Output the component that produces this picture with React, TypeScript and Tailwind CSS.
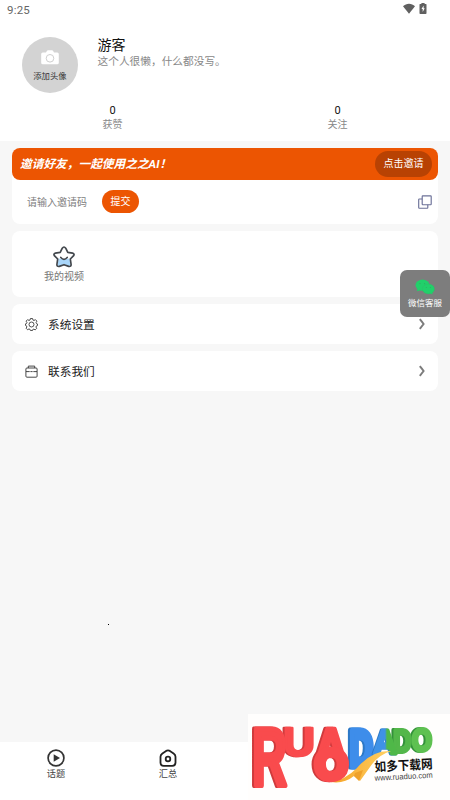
import { useState } from "react";
import type { ReactNode } from "react";

interface StatProps {
  value: number;
  label: string;
}

const Stat = ({ value, label }: StatProps) => (
  <div className="flex w-1/2 flex-col items-center">
    <span className="h-[14px] text-[11px] leading-[14px] text-[#111]">{value}</span>
    <span className="h-[14px] text-[10px] leading-[14px] text-[#888]">{label}</span>
  </div>
);

interface MenuRowProps {
  icon: ReactNode;
  label: string;
}

const MenuRow = ({ icon, label }: MenuRowProps) => (
  <button className="flex h-10 w-full items-center rounded-[8px] bg-white pl-[12.5px] pr-[12px] text-left">
    {icon}
    <span className="ml-[10.5px] flex-1 pt-px text-[11.7px] leading-4 text-[#222]">{label}</span>
    <svg viewBox="0 0 8 12" className="h-3 w-2" fill="none" stroke="#7c7c7c" strokeWidth="2">
      <path d="M1.8 1.2 Q3.8 3.6 5.6 6 Q3.8 8.4 1.8 10.8" />
    </svg>
  </button>
);

const WifiIcon = () => (
  <svg viewBox="0 0 12 11" className="h-[11px] w-3" fill="#606060">
    <path d="M0 3.2 C3.3-.2 8.7-.2 12 3.2 L6 10.8 Z" />
  </svg>
);

const BatteryIcon = () => (
  <svg viewBox="0 0 8 11" className="h-[11px] w-2">
    <path d="M2.4 0h3.2v1H7q.5 0 .5.6v8.6q0 .8-.8.8H1.3q-.8 0-.8-.8V1.6Q.5 1 1 1h1.4Z" fill="#606060" />
    <path d="M4.6 2.6 2.5 6.1h1.2v2.8l2-3.7H4.6Z" fill="#fff" />
  </svg>
);

const CameraIcon = () => (
  <svg viewBox="0 0 18 15" className="h-[15px] w-[18px]">
    <path d="M5 2.5 6 .8Q6.3.3 7 .3h4q.7 0 1 .5l1 1.7h3.2q1.6 0 1.6 1.6v8.6q0 1.6-1.6 1.6H1.8Q.2 14.3.2 12.7V4.1q0-1.6 1.6-1.6Z" fill="#fff" />
    <circle cx="9" cy="8.3" r="3.8" fill="#fff" stroke="#cfcfcf" strokeWidth="1" />
  </svg>
);

const CopyIcon = () => (
  <svg viewBox="0 0 14 14" className="h-[14px] w-[14px]" fill="none" stroke="#6c7198" strokeWidth="1.15">
    <rect x="4.2" y=".8" width="9" height="8.9" rx=".6" />
    <path d="M4.2 4H1.3q-.6 0-.6.6v8q0 .6.6.6h7.9q.6 0 .6-.6V9.7" />
  </svg>
);

const StarIcon = () => (
  <svg viewBox="0 0 22 22" className="h-[22px] w-[22px]">
    <path d="M5.6 12.5q5.2 1.5 10.8 0l1.1 6.5q-.4 1.5-2 .9L11 18.2l-4.5 1.9q-1.7.3-1.9-1.1Z" fill="#a9d6fa" />
    <path
      d="M9.3 2.2Q11-.2 12.7 2.2L14.8 6.3l4.8.8q2.4.7.8 2.8L17.3 13l.8 5.5q0 2.4-2.4 1.9L11 18.7l-4.7 1.7q-2.4.5-2.4-1.9L4.7 13 1.6 9.9Q0 7.8 2.4 7.1l4.8-.8Z"
      fill="none"
      stroke="#42474d"
      strokeWidth="1.7"
      strokeLinejoin="round"
    />
    <path d="M7.8 11.5q3.2 3.6 6.4 0" fill="none" stroke="#42474d" strokeWidth="1.7" strokeLinecap="round" />
  </svg>
);

const GearIcon = () => (
  <svg viewBox="0 0 24 24" className="h-[13px] w-[13px]" fill="none" stroke="#333" strokeWidth="1.6" strokeLinejoin="round">
    <path d="M10 1h4l.7 2.8 2 .8L19.2 3l2.8 2.8-1.6 2.5.8 2 1.8.7v3l-2 .7-.8 2 1.4 2.4-2.8 2.8-2.4-1.4-2 .8L14 23h-4l-.7-2-2-.8-2.5 1.5L2 18.9l1.5-2.4-.8-2-1.7-.7v-3l1.8-.6.8-2L2 5.8 4.8 3l2.5 1.5 2-.8Z" />
    <circle cx="12" cy="12" r="4.6" />
  </svg>
);

const BriefcaseIcon = () => (
  <svg viewBox="0 0 13 13" className="h-[13px] w-[13px]" fill="none" stroke="#333" strokeWidth=".9">
    <rect x=".9" y="3" width="11.2" height="9.2" rx="1" />
    <path d="M3.3 3V1.1h6.4V3M1 6.6h3.7M8.3 6.6H12M5.4 6.6h2.2" />
  </svg>
);

const WechatIcon = () => (
  <svg viewBox="0 0 20 16" className="h-4 w-5">
    <ellipse cx="7.5" cy="6.2" rx="7" ry="5.6" fill="#21d06a" />
    <path d="m2.7 9-.8 3.2 4-1.3Z" fill="#21d06a" />
    <ellipse cx="13.4" cy="10" rx="6.1" ry="5" fill="#21d06a" stroke="#35b067" strokeWidth=".3" />
    <path d="m14.5 13.8 3 1.8-.3-2.8Z" fill="#21d06a" />
    <g fill="#35a862">
      <circle cx="5" cy="4.6" r=".6" />
      <circle cx="9.6" cy="4.6" r=".6" />
      <circle cx="11.3" cy="8.4" r=".5" />
      <circle cx="15.3" cy="8.4" r=".5" />
    </g>
  </svg>
);

const PlayCircleIcon = () => (
  <svg viewBox="0 0 18 18" className="h-[18px] w-[18px]">
    <circle cx="9" cy="9" r="7.9" fill="none" stroke="#333" strokeWidth="1.7" />
    <path d="M6.7 5.2v7.6L13 9Z" fill="#333" />
  </svg>
);

const HomeIcon = () => (
  <svg viewBox="0 0 18 18" className="h-[18px] w-[18px]" fill="none" stroke="#222" strokeWidth="1.8">
    <path d="M7.1 1.9q1.9-1 3.8 0l3.7 2.5q1.9 1.3 1.9 3.4v5.7q0 3.3-3.2 3.3H4.7q-3.2 0-3.2-3.3V7.8q0-2.1 1.9-3.4Z" />
    <circle cx="9" cy="10" r="2.3" />
  </svg>
);

// Ink bounds of the capitals in Liberation Sans Bold at 100px: left edge and width
const INK: Record<string, [number, number]> = {
  R: [6.7, 63.5],
  U: [6, 60],
  A: [1, 70],
  D: [6.7, 61.5],
  O: [4.1, 69.6],
};

interface LogoLetterProps {
  char: string;
  x: number;
  y: number;
  w: number;
  h: number;
  color: string;
  bold?: number;
}

// One letter of the logo, stretched to fill a box. "bold" is in glyph units
const LogoLetter = ({ char, x, y, w, h, color, bold = 6 }: LogoLetterProps) => {
  const [left, width] = INK[char];
  const sx = w / (width + bold);
  const sy = h / (68.8 + bold);
  return (
    <text
      transform={`translate(${x - (left - bold / 2) * sx} ${y + h - (bold / 2) * sy}) scale(${sx} ${sy})`}
      fontFamily="Liberation Sans, Arial, sans-serif"
      fontWeight="700"
      fontSize="100"
      fill={color}
      stroke={color}
      strokeWidth={bold}
      strokeLinejoin="round"
    >
      {char}
    </text>
  );
};

const Watermark = () => (
  <svg viewBox="248 714 202 86" className="block h-[86px] w-[202px]">
    <defs>
      <linearGradient id="blueGreen" x1="0" x2="1" y1="0" y2="0">
        <stop offset=".5" stopColor="#3f92e6" />
        <stop offset=".58" stopColor="#4fb848" />
      </linearGradient>
      <linearGradient id="ribbon" x1="0" x2="1" y1="0" y2="0">
        <stop offset="0" stopColor="#f6a326" />
        <stop offset="1" stopColor="#ffd163" />
      </linearGradient>
    </defs>
    <g className="drop-shadow-[-1.5px_0_0_#33913a]">
      <LogoLetter char="O" x={411.5} y={727} w={21} h={26} color="#5ec151" bold={12} />
    </g>
    <g className="drop-shadow-[-1.5px_0_0_#33913a]">
      <LogoLetter char="D" x={393.5} y={728} w={18.5} h={26} color="#53b74a" bold={12} />
    </g>
    <g className="drop-shadow-[-1.5px_0_0_#2c78c6]">
      <LogoLetter char="D" x={350} y={728} w={24} h={42} color="#3e8dea" bold={14} />
    </g>
    <g className="drop-shadow-[-1px_0_0_#2c78c6]">
      <LogoLetter char="A" x={372} y={728} w={26} h={28} color="url(#blueGreen)" bold={9} />
    </g>
    <path d="M331 782 Q345 780 357 768 Q372 750 391 751 Q378 755 370 767 L360 781 L354 776 Q344 784 331 782Z" fill="url(#ribbon)" />
    <path d="M355 773 l8 -3 -4 11 -5 -5Z" fill="#efa12a" />
    <g className="drop-shadow-[-1.5px_0_0_#d03a3c]">
      <LogoLetter char="U" x={284.5} y={727} w={29} h={30.5} color="#f94b4d" bold={6} />
    </g>
    <g className="drop-shadow-[-1.5px_0_0_#d03a3c]">
      <LogoLetter char="A" x={313.5} y={727} w={35} h={39} color="#f94b4d" bold={9} />
      <LogoLetter char="O" x={313.5} y={746} w={35.5} h={36} color="#f94b4d" bold={15} />
    </g>
    <g className="drop-shadow-[-1.5px_0_0_#d03a3c]">
      <LogoLetter char="R" x={254} y={726} w={33.5} h={61.5} color="#f94b4d" bold={6} />
    </g>
    <g transform="rotate(-3 404 765)">
      <text x="374.5" y="770" textLength="58" lengthAdjust="spacingAndGlyphs" fontFamily="Noto Sans CJK SC, sans-serif" fontWeight="700" fontSize="12.8" fill="#111">
        如多下载网
      </text>
      <text x="374" y="779.2" textLength="58" lengthAdjust="spacingAndGlyphs" fontFamily="Liberation Sans, Arial, sans-serif" fontSize="8.2" fill="#444">
        www.ruaduo.com
      </text>
    </g>
  </svg>
);

const App = () => {
  const [inviteCode, setInviteCode] = useState("");

  return (
    <div className="relative flex h-[800px] w-[450px] flex-col overflow-hidden bg-[#f7f7f7] font-['Roboto','Noto_Sans_CJK_SC',sans-serif]">
      {/* Status bar and profile */}
      <header className="h-[141px] shrink-0 bg-white">
        <div className="flex h-[20px] items-start justify-between pl-[7px] pr-[23px]">
          <span className="text-[11.5px] leading-[20px] tracking-[0.2px] text-[#666]">9:25</span>
          <div className="flex items-center gap-1 pt-[3px]">
            <WifiIcon />
            <BatteryIcon />
          </div>
        </div>
        <div className="flex pl-[22px] pt-[17px]">
          <div className="flex h-14 w-14 shrink-0 flex-col items-center rounded-full bg-[#d3d3d3] pt-[12.5px]">
            <CameraIcon />
            <span className="mt-[5.5px] text-[8.4px] leading-3 text-[#333]">添加头像</span>
          </div>
          <div className="ml-[19.5px]">
            <h1 className="h-4 text-[14px] leading-4 text-[#111]">游客</h1>
            <p className="mt-[1px] text-[10.7px] leading-4 text-[#888]">这个人很懒，什么都没写。</p>
          </div>
        </div>
        <div className="flex pt-[11px]">
          <Stat value={0} label="获赞" />
          <Stat value={0} label="关注" />
        </div>
      </header>

      <main className="flex flex-1 flex-col gap-[7px] px-3 pt-[7px]">
        {/* Invite card */}
        <section className="h-[76px] rounded-[8px] bg-white">
          <div className="flex h-8 items-center justify-between rounded-[8px] bg-[#ec5502] pl-[8px] pr-[6px]">
            <span className="pt-px text-[11.7px] font-bold italic text-white">邀请好友，一起使用之之AI！</span>
            <button className="h-[26px] w-[57px] rounded-full bg-[#b84203] text-[10px] leading-[24px] text-white">点击邀请</button>
          </div>
          <div className="flex h-[43px] items-center pl-[15px] pr-[6px]">
            <input
              value={inviteCode}
              onChange={(e) => setInviteCode(e.target.value)}
              placeholder="请输入邀请码"
              className="w-[75px] pt-px text-[10px] outline-none placeholder:text-[#808080]"
            />
            <button className="h-[23px] w-[37px] rounded-full bg-[#ec5502] text-[10px] leading-[23px] text-white">提交</button>
            <button className="ml-auto" aria-label="复制">
              <CopyIcon />
            </button>
          </div>
        </section>

        <section className="h-[66px] rounded-[8px] bg-white pt-[15px]">
          <button className="ml-8 flex w-10 flex-col items-center">
            <StarIcon />
            <span className="mt-[2px] text-[10px] leading-[14px] text-[#777]">我的视频</span>
          </button>
        </section>

        <MenuRow icon={<GearIcon />} label="系统设置" />
        <MenuRow icon={<BriefcaseIcon />} label="联系我们" />
      </main>

      <nav className="flex h-[58px] shrink-0 bg-white pt-[7px] text-[#444]">
        <button className="flex w-[112px] flex-col items-center">
          <PlayCircleIcon />
          <span className="mt-px text-[9.2px] leading-3">话题</span>
        </button>
        <button className="flex w-[112px] flex-col items-center">
          <HomeIcon />
          <span className="mt-px text-[9.2px] leading-3">汇总</span>
        </button>
      </nav>

      {/* Floating customer service button */}
      <button className="absolute right-0 top-[270px] flex h-[47px] w-[50px] flex-col items-center rounded-[7px] bg-[#7d7d7d] pt-[9px]">
        <WechatIcon />
        <span className="mt-[2px] text-[8.5px] leading-3 text-white">微信客服</span>
      </button>

      <div className="absolute left-[108px] top-[624px] h-px w-px bg-black" />

      <div className="absolute bottom-0 right-0 bg-[#fffefd]">
        <Watermark />
      </div>
    </div>
  );
};

export default App;
